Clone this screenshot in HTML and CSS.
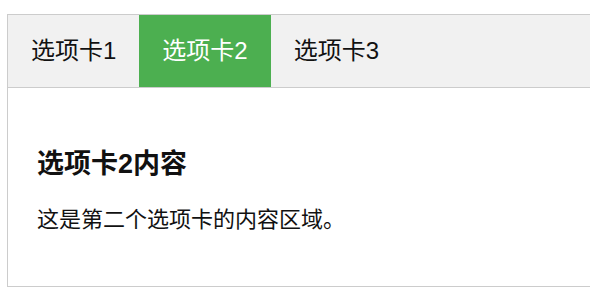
FILE: index.html
```html
<!DOCTYPE html>
<html lang="zh">
<head>
<meta charset="utf-8">
<link rel="stylesheet" href="styles.css">
</head>
<body>
<div class="tabs">
  <div class="tab-bar">
    <button class="tab">选项卡1</button>
    <button class="tab active">选项卡2</button>
    <button class="tab">选项卡3</button>
  </div>
  <div class="tab-content">
    <h3 class="title">选项卡2内容</h3>
    <p class="text">这是第二个选项卡的内容区域。</p>
  </div>
</div>
</body>
</html>
```

FILE: styles.css
```css
html, body {
  margin: 0;
  padding: 0;
  background: #fff;
  overflow: hidden;
}
body {
  font-family: "Liberation Sans", "Noto Sans CJK SC", sans-serif;
  color: #111;
}
.tabs {
  margin: 14px 0 0 7px;
}
.tab-bar {
  display: flex;
  background: #f1f1f1;
  border: 1px solid #ccc;
  border-right: none;
}
.tab {
  font-family: inherit;
  font-size: 24px;
  line-height: 28px;
  padding: 22px 23px;
  border: none;
  background: transparent;
  color: #111;
  margin: 0;
  cursor: pointer;
}
.tab.active {
  background: #4caf50;
  color: #fff;
}
.tab-content {
  border: 1px solid #ccc;
  border-top: none;
  border-right: none;
  padding: 58px 29px 50px;
}
.title {
  margin: 0;
  font-size: 27px;
  line-height: 36px;
  font-weight: bold;
}
.text {
  margin: 22px 0 0;
  font-size: 22px;
  line-height: 32px;
}
```
